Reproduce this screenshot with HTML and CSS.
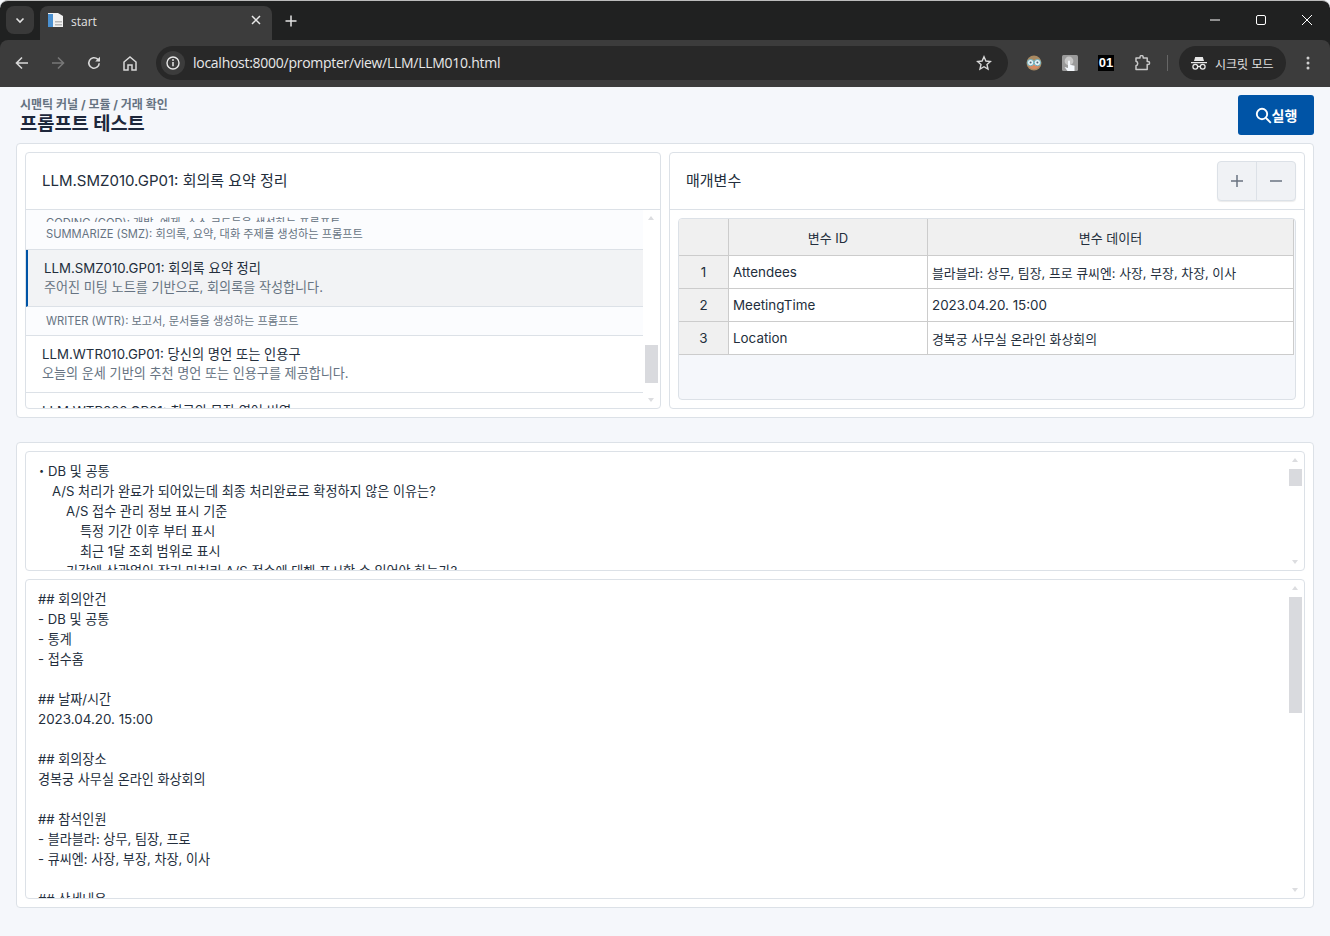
FILE: index.html
```html
<!DOCTYPE html>
<html lang="ko">
<head>
<meta charset="utf-8">
<title>start</title>
<link rel="stylesheet" href="styles.css">
</head>
<body>
<div class="chrome">
  <div class="tabstrip">
    <div class="tabsearch"><svg width="12" height="12" viewBox="0 0 12 12"><path d="M2.5 4.5 6 8l3.5-3.5" fill="none" stroke="#e3e3e3" stroke-width="1.6"/></svg></div>
    <div class="tab">
      <svg class="favicon" width="17" height="16" viewBox="0 0 17 16"><path d="M1 1h10l5 3v11H1z" fill="#f1f1f1"/><rect x="1" y="2" width="5" height="13" fill="#4a90d0"/><rect x="8" y="9" width="7" height="1.5" fill="#b8b8b8"/><rect x="8" y="12" width="7" height="1.5" fill="#b8b8b8"/></svg>
      <span class="tabtitle">start</span>
      <svg class="tabclose" width="10" height="10" viewBox="0 0 10 10"><path d="M1 1l8 8M9 1l-8 8" stroke="#e8e8e8" stroke-width="1.5"/></svg>
    </div>
    <svg class="newtab" width="12" height="12" viewBox="0 0 12 12"><path d="M6 .5v11M.5 6h11" stroke="#e3e3e3" stroke-width="1.5"/></svg>
    <div class="winctl">
      <svg width="10" height="10" viewBox="0 0 10 10"><path d="M0 5h10" stroke="#fff"/></svg>
      <svg width="10" height="10" viewBox="0 0 10 10"><rect x=".5" y=".5" width="9" height="9" rx="1.5" fill="none" stroke="#fff"/></svg>
      <svg width="10" height="10" viewBox="0 0 10 10"><path d="M0 0l10 10M10 0L0 10" stroke="#fff"/></svg>
    </div>
  </div>
  <div class="toolbar">
    <svg class="nav" width="14" height="14" viewBox="0 0 14 14"><path d="M13 7H2M7 1.5 1.5 7 7 12.5" fill="none" stroke="#d8d8d8" stroke-width="1.6"/></svg>
    <svg class="nav" width="14" height="14" viewBox="0 0 14 14"><path d="M1 7h11M7 1.5 12.5 7 7 12.5" fill="none" stroke="#777" stroke-width="1.6"/></svg>
    <svg class="nav" width="14" height="14" viewBox="0 0 14 14"><path d="M12.2 7.2A5.2 5.2 0 1 1 10.6 3.2L12.4 5" fill="none" stroke="#d8d8d8" stroke-width="1.6"/><path d="M13 .8V5.6H8.2z" fill="#d8d8d8"/></svg>
    <svg class="nav" width="14" height="15" viewBox="0 0 14 15"><path d="M1 14V6l6-5 6 5v8H9V9H5v5z" fill="none" stroke="#d8d8d8" stroke-width="1.5"/></svg>
    <div class="omnibox">
      <div class="infochip"><svg width="14" height="14" viewBox="0 0 14 14"><circle cx="7" cy="7" r="6" fill="none" stroke="#e8e8e8" stroke-width="1.4"/><path d="M7 6v4.2" stroke="#e8e8e8" stroke-width="1.5"/><circle cx="7" cy="4" r=".95" fill="#e8e8e8"/></svg></div>
      <span class="url">localhost:8000/prompter/view/LLM/LLM010.html</span>
      <svg class="star" width="16" height="16" viewBox="0 0 16 16"><path d="M8 1.8l1.9 4.2 4.5.5-3.4 3 1 4.5L8 11.7 4 14l1-4.5-3.4-3 4.5-.5z" fill="none" stroke="#d8d8d8" stroke-width="1.4"/></svg>
    </div>
    <div class="exts">
      <svg width="16" height="16" viewBox="0 0 16 16"><circle cx="8" cy="8" r="7.5" fill="#a98a62"/><path d="M2 10a6.5 6.5 0 0 0 12 0V9H2z" fill="#d98a62"/><circle cx="4.6" cy="7.6" r="3.2" fill="#e2f2f6" stroke="#6fb0c0"/><circle cx="11.4" cy="7.6" r="3.2" fill="#e2f2f6" stroke="#6fb0c0"/><circle cx="4.6" cy="7.6" r="1" fill="#567"/><circle cx="11.4" cy="7.6" r="1" fill="#567"/></svg>
      <svg width="16" height="16" viewBox="0 0 16 16"><rect width="16" height="16" rx="1.5" fill="#9a9a9a"/><circle cx="7" cy="6" r="4.4" fill="#c6c6c6"/><path d="M6 6.5a1 1 0 0 1 2 0v3.2l4.5 1V16H5.5l-3-4 3.5 1z" fill="#f4f8fc"/></svg>
      <span class="ext01">01</span>
      <svg width="17" height="16" viewBox="0 0 17 16"><path d="M2 3h4V2.2a1.6 1.6 0 0 1 3.2 0V3h4v3.4h.8a1.6 1.6 0 0 1 0 3.2h-.8V14.6H2V10.8a2.4 2.4 0 0 0 0-4.6z" fill="none" stroke="#c8c8c8" stroke-width="1.5" stroke-linejoin="round"/></svg>
    </div>
    <div class="divider"></div>
    <div class="incognito">
      <svg width="16" height="14" viewBox="0 0 16 14"><path d="M3 5l1.2-4h7.6L13 5zM0 6h16v1.2H0z" fill="#e8e8e8"/><circle cx="4.3" cy="10.8" r="2.4" fill="none" stroke="#e8e8e8" stroke-width="1.3"/><circle cx="11.7" cy="10.8" r="2.4" fill="none" stroke="#e8e8e8" stroke-width="1.3"/><path d="M6.7 10.5h2.6" stroke="#e8e8e8" stroke-width="1.2"/></svg>
      <span>시크릿 모드</span>
    </div>
    <svg class="kebab" width="4" height="14" viewBox="0 0 4 14"><circle cx="2" cy="2" r="1.5" fill="#d0d0d0"/><circle cx="2" cy="7" r="1.5" fill="#d0d0d0"/><circle cx="2" cy="12" r="1.5" fill="#d0d0d0"/></svg>
  </div>
</div>

<main class="page">
  <header class="pagehead">
    <div>
      <div class="crumb">시맨틱 커널 / 모듈 / 거래 확인</div>
      <h1 class="title">프롬프트 테스트</h1>
    </div>
    <button class="runbtn"><svg width="17" height="17" viewBox="0 0 17 17"><circle cx="7" cy="7" r="5.2" fill="none" stroke="#fff" stroke-width="1.9"/><path d="M11 11l4.8 4.8" stroke="#fff" stroke-width="1.9"/></svg>실행</button>
  </header>

  <section class="outer topouter">
    <div class="card">
      <div class="cardhead"><span class="headtitle">LLM.SMZ010.GP01: 회의록 요약 정리</span></div>
      <div class="listwrap">
        <div class="list">
          <div class="clipgroup"><div class="group groupinner">CODING (COD): 개발, 예제, 소스 코드들을 생성하는 프롬프트</div></div>
          <div class="group summarize">SUMMARIZE (SMZ): 회의록, 요약, 대화 주제를 생성하는 프롬프트</div>
          <div class="item selected">
            <div class="itemtitle">LLM.SMZ010.GP01: 회의록 요약 정리</div>
            <div class="itemdesc">주어진 미팅 노트를 기반으로, 회의록을 작성합니다.</div>
          </div>
          <div class="group writer">WRITER (WTR): 보고서, 문서들을 생성하는 프롬프트</div>
          <div class="item">
            <div class="itemtitle">LLM.WTR010.GP01: 당신의 명언 또는 인용구</div>
            <div class="itemdesc">오늘의 운세 기반의 추천 명언 또는 인용구를 제공합니다.</div>
          </div>
          <div class="item last">
            <div class="itemtitle">LLM.WTR020.GP01: 최근의 문장 영어 번역</div>
          </div>
        </div>
        <div class="sbar sbarlist"><i class="up"></i><b class="thumb thumblist"></b><i class="down"></i></div>
      </div>
    </div>

    <div class="card">
      <div class="cardhead">
        <span class="headtitle">매개변수</span>
        <div class="btngroup">
          <button class="pm"><svg width="12" height="12" viewBox="0 0 12 12"><path d="M6 0v12M0 6h12" stroke="#6a7380" stroke-width="1.5"/></svg></button>
          <button class="pm"><svg width="12" height="12" viewBox="0 0 12 12"><path d="M0 6h12" stroke="#6a7380" stroke-width="1.5"/></svg></button>
        </div>
      </div>
      <div class="tablearea">
        <div class="tablewrap">
          <table class="grid">
            <colgroup><col class="c1"><col class="c2"><col class="c3"></colgroup>
            <thead><tr><th></th><th>변수 ID</th><th>변수 데이터</th></tr></thead>
            <tbody>
              <tr><th class="num">1</th><td>Attendees</td><td class="ko">블라블라: 상무, 팀장, 프로 큐씨엔: 사장, 부장, 차장, 이사</td></tr>
              <tr><th class="num">2</th><td>MeetingTime</td><td>2023.04.20. 15:00</td></tr>
              <tr><th class="num">3</th><td>Location</td><td class="ko">경복궁 사무실 온라인 화상회의</td></tr>
            </tbody>
          </table>
        </div>
      </div>
    </div>
  </section>

  <section class="outer bottomouter">
    <div class="textbox box1">
      <div class="boxtext">
        <div class="bullet">・DB 및 공통</div>
        <div class="ind1">A/S 처리가 완료가 되어있는데 최종 처리완료로 확정하지 않은 이유는?</div>
        <div class="ind2">A/S 접수 관리 정보 표시 기준</div>
        <div class="ind3">특정 기간 이후 부터 표시</div>
        <div class="ind3">최근 1달 조회 범위로 표시</div>
        <div class="ind2">기간에 상관없이 장기 미처리 A/S 접수에 대해 표시할 수 있어야 하는가?</div>
      </div>
      <div class="sbar"><i class="up"></i><b class="thumb thumb1"></b><i class="down"></i></div>
    </div>
    <div class="textbox box2">
      <pre class="boxtext">## 회의안건
- DB 및 공통
- 통계
- 접수홈

## 날짜/시간
<span class="date">2023.04.20. 15:00</span>

## 회의장소
경복궁 사무실 온라인 화상회의

## 참석인원
- 블라블라: 상무, 팀장, 프로
- 큐씨엔: 사장, 부장, 차장, 이사

## 상세내용</pre>
      <div class="sbar"><i class="up"></i><b class="thumb thumb2"></b><i class="down"></i></div>
    </div>
  </section>
</main>
</body>
</html>
```
FILE: styles.css
```css
* { box-sizing: border-box; }
html, body { margin: 0; height: 936px; overflow: hidden; }
body { background: #f5f7fb; font-family: Inter, "Noto Sans CJK KR", sans-serif; color: #232e3c; font-size: 13.5px; }

/* browser chrome */
.chrome { height: 87px; background: #202121; border-top: 1px solid #bcbcbc; border-radius: 8px 8px 0 0; display: flex; flex-direction: column; }
.tabstrip { height: 39px; display: flex; align-items: flex-start; padding: 5px 0 0 6px; }
.tabsearch { width: 28px; height: 28px; border-radius: 8px; background: #393939; display: flex; align-items: center; justify-content: center; }
.tab { width: 232px; height: 34px; margin-left: 6px; border-radius: 8px 8px 0 0; background: #3c3c3c; display: flex; align-items: center; padding: 0 11px 6px 7px; }
.favicon { flex: none; }
.tabtitle { margin: 2px 0 0 7px; color: #e3e3e3; font: 12px "Open Sans", sans-serif; flex: 1; }
.newtab { margin: 9px 0 0 13px; }
.winctl { margin-left: auto; margin-top: 9px; padding-right: 18px; display: flex; gap: 36px; }
.toolbar { height: 47px; background: #3c3c3c; display: flex; align-items: center; padding: 0 0 1px 15px; border-radius: 8px 8px 0 0; }
.nav { margin-right: 22px; flex: none; }
.nav:nth-child(4) { margin-right: 19px; }
.omnibox { width: 852px; height: 34px; border-radius: 17px; background: #282828; display: flex; align-items: center; padding: 0 16px 0 5px; }
.infochip { width: 24px; height: 24px; border-radius: 12px; background: #3c3c3c; display: flex; align-items: center; justify-content: center; }
.url { margin: -1px 0 0 8px; color: #e8e8e8; font: 14px "Open Sans", sans-serif; letter-spacing: -.27px; flex: 1; }
.exts { display: flex; align-items: center; gap: 20px; margin-left: 18px; }
.ext01 { width: 16px; height: 16px; background: #000; color: #fff; font: bold 13px/16px "Liberation Sans", sans-serif; text-align: center; }
.divider { width: 1px; height: 16px; background: #666; margin: 0 11px 0 16px; }
.incognito { width: 107px; height: 34px; border-radius: 17px; background: #282828; display: flex; align-items: center; padding-left: 12px; gap: 8px; color: #e3e3e3; font-size: 12px; }
.kebab { margin-left: 20px; }

/* page */
.page { padding: 0 16px; }
.pagehead { height: 56px; display: flex; justify-content: space-between; align-items: flex-start; padding: 8px 0 0 4px; }
.crumb { font-size: 12px; font-weight: 700; color: #667382; line-height: 18px; margin-top: 1px; }
.title { margin: 0; font-size: 18.7px; font-weight: 700; color: #1d273b; line-height: 19px; }
.runbtn { width: 76px; height: 40px; border: 0; border-radius: 3px; background: #0054a6; color: #fff; font: 600 14px Inter, "Noto Sans CJK KR", sans-serif; display: flex; align-items: center; justify-content: center; gap: 0; padding: 0; }

.outer { background: #fff; border: 1px solid #dce1e7; border-radius: 4px; }
.topouter { height: 275px; padding: 8px; display: grid; grid-template-columns: 636px 636px; gap: 8px; }
.card { border: 1px solid #dce1e7; border-radius: 4px; display: flex; flex-direction: column; overflow: hidden; }
.cardhead { height: 57px; flex: none; border-bottom: 1px solid #dce1e7; display: flex; align-items: center; justify-content: space-between; padding: 0 8px 0 16px; color: #232e3c; }
.headtitle { font-size: 15px; margin-bottom: 4px; }
.listwrap { flex: 1; display: flex; min-height: 0; }
.list { flex: 1; overflow: hidden; min-width: 0; }
.clipgroup { height: 12px; overflow: hidden; }
.groupinner { border: 0; padding-top: 4px; }
.group { padding-left: 20px; font-size: 11.2px; color: #667382; background: #fbfcfe; }
.summarize { height: 28px; line-height: 25px; border-bottom: 1px solid #dce1e7; }
.writer { height: 29px; line-height: 28px; border-bottom: 1px solid #dce1e7; }
.item { height: 57px; padding: 8px 16px 0; border-bottom: 1px solid #dce1e7; line-height: 20px; }
.item.selected { background: #f2f3f5; border-left: 2px solid #0054a6; padding-left: 16px; height: 57px; }
.item.last { border: 0; }
.itemtitle { font-size: 13.25px; color: #232e3c; }
.itemdesc { font-size: 13.1px; color: #667382; margin-top: -1px; }
.sbar { width: 17px; flex: none; display: flex; flex-direction: column; align-items: center; position: relative; }
.sbar .up, .sbar .down { position: absolute; left: 5px; width: 0; height: 0; border-left: 3.5px solid transparent; border-right: 3.5px solid transparent; }
.sbar .up { top: 6px; border-bottom: 4px solid #dcdde0; }
.sbar .down { bottom: 6px; border-top: 4px solid #dcdde0; }
.thumb { display: block; width: 13px; background: #d9dade; }
.sbarlist { padding-top: 135px; }
.thumblist { height: 38px; }
.btngroup { display: flex; width: 79px; height: 40px; border: 1px solid #dce1e7; border-radius: 4px; background: #f0f2f5; box-shadow: 0 1px 1px rgba(0,0,0,.08); }
.pm { flex: 1; border: 0; background: none; padding: 0; display: flex; align-items: center; justify-content: center; }
.pm:first-child { border-right: 1px solid #dce1e7; }
.tablearea { padding: 8px; flex: 1; }
.tablewrap { height: 182px; width: 618px; border: 1px solid #dce1e7; border-radius: 4px; background: #f5f7fb; overflow: hidden; }
.grid { border-collapse: collapse; table-layout: fixed; width: 615px; margin: -1px 0 0 -1px; font-size: 13.4px; color: #232e3c; }
.c1 { width: 50px; } .c2 { width: 199px; } .c3 { width: 366px; }
.grid th, .grid td { border: 1px solid #ccc; height: 33px; padding: 0 4px; font-weight: 400; }
.grid thead th { height: 37px; background: #f0f0f0; text-align: center; font-size: 13px; }
.grid .num { background: #f0f0f0; text-align: center; }
.grid td { background: #fff; white-space: nowrap; overflow: hidden; }
.grid td.ko { font-size: 12.9px; }

.bottomouter { margin-top: 24px; height: 466px; padding: 8px; display: flex; flex-direction: column; gap: 8px; }
.textbox { border: 1px solid #dce1e7; border-radius: 4px; display: flex; overflow: hidden; background: #fff; }
.box1 { height: 120px; }
.box2 { height: 320px; }
.boxtext { flex: 1; margin: 0; padding: 9px 12px; font: 13.1px/20px Inter, "Noto Sans CJK KR", sans-serif; color: #232e3c; overflow: hidden; min-width: 0; }
.date { font-size: 13.4px; }
.bullet { margin-left: -3px; }
.ind1 { padding-left: 14px; } .ind2 { padding-left: 28px; } .ind3 { padding-left: 42px; }
.textbox .sbar { width: 17px; margin-right: 0; padding-top: 17px; }
.thumb1 { height: 17px; }
.thumb2 { height: 116px; }
```
